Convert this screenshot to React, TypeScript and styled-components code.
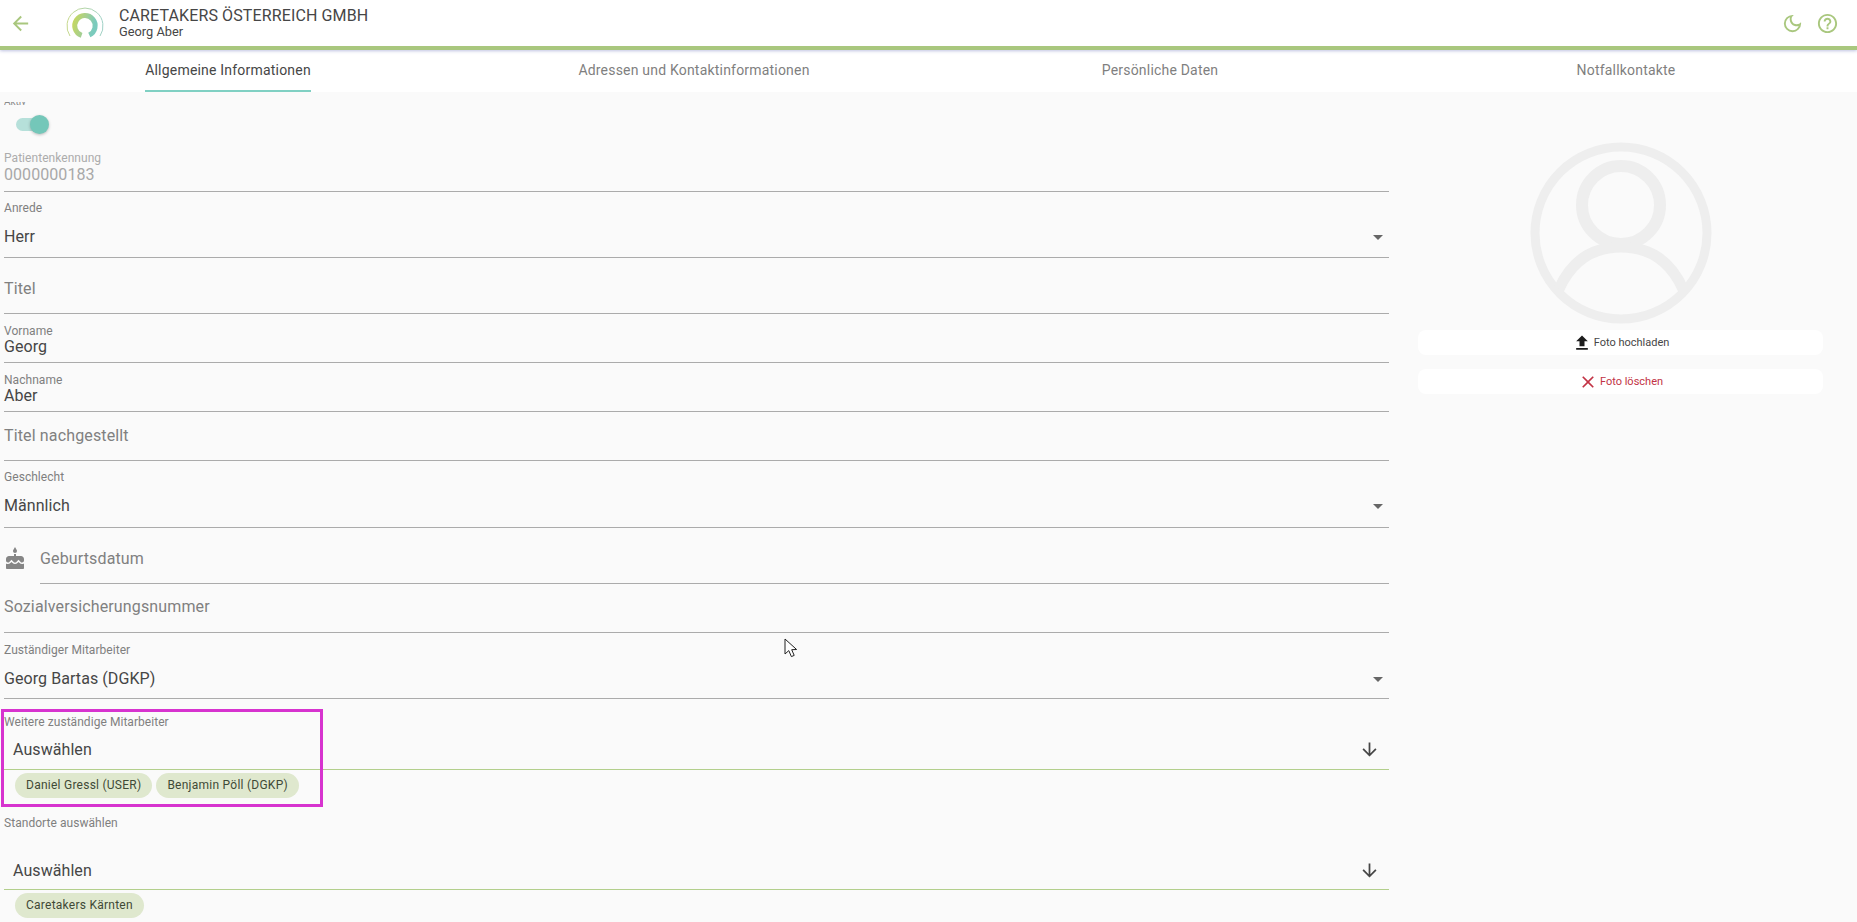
import React from "react";
import styled, { createGlobalStyle } from "styled-components";
import {
  MdArrowBack,
  MdArrowDownward,
  MdCake,
  MdClose,
  MdFileUpload,
  MdHelpOutline,
  MdOutlineDarkMode,
} from "react-icons/md";

const Global = createGlobalStyle`
  html, body { margin: 0; padding: 0; height: 100%; overflow: hidden; background: #fafafa; }
  body { font-family: Roboto, "Liberation Sans", sans-serif; color: #464646; }
  * { box-sizing: border-box; }
`;

const Page = styled.div`
  position: relative;
  height: 922px;
  overflow: hidden;
`;

const Header = styled.header`
  height: 50px;
  background: #fff;
  border-bottom: 4px solid #a9c77e;
  box-shadow: 0 1px 3px rgba(110, 120, 190, 0.45);
  display: flex;
  align-items: center;
  position: relative;
  z-index: 2;
`;

const BackButton = styled.div`
  width: 59px;
  padding-left: 9px;
  display: flex;
  color: #a9c77e;
  font-size: 23px;
`;

const LogoBox = styled.div`
  width: 60px;
  height: 46px;
  flex: none;
`;

const TitleBlock = styled.div`
  flex: 1;
  display: flex;
  flex-direction: column;
  padding-bottom: 2px;
`;

const Company = styled.div`
  font-size: 16px;
  line-height: 19px;
  letter-spacing: 0.12px;
  color: #464646;
`;

const Person = styled.div`
  font-size: 12.8px;
  line-height: 14px;
  color: #464646;
`;

const HeaderActions = styled.div`
  display: flex;
  align-items: center;
  gap: 12px;
  padding-right: 18px;
  color: #a9c77e;
  font-size: 23px;
`;

const Tabs = styled.nav`
  height: 42px;
  background: #fff;
  display: grid;
  grid-template-columns: repeat(4, 466px);
  margin-left: -5px;
  width: 1864px;
`;

const TabCell = styled.div`
  display: flex;
  justify-content: center;
`;

const Tab = styled.div<{ $active?: boolean }>`
  height: 42px;
  line-height: 41px;
  font-size: 14px;
  letter-spacing: 0.2px;
  white-space: nowrap;
  color: ${(p) => (p.$active ? "#464646" : "#7f7f7f")};
  border-bottom: 2px solid ${(p) => (p.$active ? "#80d0c3" : "transparent")};
`;

const Content = styled.main`
  display: grid;
  grid-template-columns: 1385px 405px;
  column-gap: 29px;
  padding-left: 4px;
`;

const FormColumn = styled.section`
  display: flex;
  flex-direction: column;
`;

const ToggleBlock = styled.div`
  height: 54px;
  padding-top: 10px;
`;

const ClippedLabel = styled.div`
  height: 3px;
  overflow: hidden;
  display: flex;
  align-items: flex-end;
  font-size: 10px;
  line-height: 7px;
  color: #8a8a8a;
`;

const Switch = styled.div`
  position: relative;
  margin: 13px 0 0 12px;
  width: 28px;
  height: 13px;
  border-radius: 7px;
  background: #b6e0da;
`;

const SwitchThumb = styled.div`
  position: absolute;
  right: -5px;
  top: -3px;
  width: 19px;
  height: 19px;
  border-radius: 50%;
  background: #74c7b9;
  box-shadow: 0 1px 3px rgba(0, 0, 0, 0.25);
`;

const Field = styled.div<{ $h: number; $pt: number; $inset?: number; $green?: boolean }>`
  height: ${(p) => p.$h}px;
  padding-top: ${(p) => p.$pt}px;
  margin-left: ${(p) => p.$inset ?? 0}px;
  border-bottom: 1px solid ${(p) => (p.$green ? "#b3cf8c" : "#ababab")};
`;

const Label = styled.div<{ $muted?: boolean }>`
  font-size: 12px;
  line-height: 14px;
  letter-spacing: 0.05px;
  color: ${(p) => (p.$muted ? "#acacac" : "#7f7f7f")};
`;

const Value = styled.div<{ $mt?: number; $tone?: "normal" | "hint" | "disabled"; $indent?: number }>`
  display: flex;
  align-items: center;
  justify-content: space-between;
  margin-top: ${(p) => p.$mt ?? 0}px;
  padding-left: ${(p) => p.$indent ?? 0}px;
  font-size: 16px;
  line-height: 20px;
  letter-spacing: ${(p) => (p.$tone === "hint" ? "0.14px" : "0.07px")};
  color: ${(p) =>
    p.$tone === "hint" ? "#808080" : p.$tone === "disabled" ? "#a8a8a8" : "#464646"};
`;

const Caret = styled.span`
  width: 0;
  height: 0;
  margin-right: 6px;
  border-left: 5px solid transparent;
  border-right: 5px solid transparent;
  border-top: 5px solid #666;
`;

const ArrowSlot = styled.span`
  display: flex;
  margin-right: 9px;
  font-size: 21px;
  color: #464646;
`;

const DateRow = styled.div`
  position: relative;
`;

const DateIcon = styled.span`
  position: absolute;
  left: -1px;
  top: 19px;
  display: flex;
  font-size: 24px;
  color: #858585;
`;

const Chips = styled.div<{ $h: number }>`
  height: ${(p) => p.$h}px;
  padding: 3px 0 0 11px;
  display: flex;
  gap: 4px;
`;

const Chip = styled.span`
  height: 25px;
  padding: 0 11px;
  border-radius: 13px;
  background: #dfe8ce;
  color: #3f4a36;
  font-size: 12px;
  letter-spacing: 0.25px;
  line-height: 25px;
  white-space: nowrap;
`;

const Highlighted = styled.div`
  position: relative;
`;

const HighlightFrame = styled.div`
  position: absolute;
  left: -3px;
  top: 10px;
  width: 322px;
  height: 98px;
  border: 3px solid #d733cf;
  pointer-events: none;
`;

const PhotoColumn = styled.aside`
  padding-top: 50px;
  display: flex;
  flex-direction: column;
  align-items: center;
`;

const Avatar = styled.svg`
  width: 182px;
  height: 182px;
  display: block;
  margin-bottom: 6px;
`;

const PhotoButton = styled.div<{ $danger?: boolean }>`
  width: 100%;
  height: 25px;
  margin-bottom: 14px;
  border-radius: 8px;
  background: #fff;
  display: flex;
  align-items: center;
  justify-content: center;
  gap: 2px;
  font-size: 11px;
  color: ${(p) => (p.$danger ? "#c23345" : "#464646")};
  & > svg {
    font-size: 20px;
    color: ${(p) => (p.$danger ? "#c23345" : "#1d1d1d")};
  }
`;

const Pointer = styled.svg`
  position: absolute;
  left: 784px;
  top: 638px;
  width: 14px;
  height: 20px;
  pointer-events: none;
`;

const Logo = () => (
  <svg width="60" height="46" viewBox="0 0 60 46" fill="none">
    <defs>
      <linearGradient id="logoArc" x1="0" y1="0" x2="1" y2="0.3">
        <stop offset="0" stopColor="#c5d85f" />
        <stop offset="0.5" stopColor="#a8cf8e" />
        <stop offset="1" stopColor="#7bcbbd" />
      </linearGradient>
      <linearGradient id="logoRing" x1="0" y1="0" x2="1" y2="0">
        <stop offset="0" stopColor="#c6d88b" />
        <stop offset="1" stopColor="#9ed0c6" />
      </linearGradient>
    </defs>
    <path d="M11 36 A18 18 0 1 1 41 36" stroke="url(#logoRing)" strokeWidth="1" />
    <path d="M22.6 35.4 A10.2 10.2 0 1 1 30.3 35" stroke="url(#logoArc)" strokeWidth="5" />
  </svg>
);

const SelectField = ({ label, value, h, pt, mt }: { label: string; value: string; h: number; pt: number; mt: number }) => (
  <Field $h={h} $pt={pt}>
    <Label>{label}</Label>
    <Value $mt={mt}>
      {value}
      <Caret />
    </Value>
  </Field>
);

const TextField = ({ label, value, h, pt }: { label: string; value: string; h: number; pt: number }) => (
  <Field $h={h} $pt={pt}>
    <Label>{label}</Label>
    <Value $mt={-1}>{value}</Value>
  </Field>
);

const EmptyField = ({ hint, h, pt }: { hint: string; h: number; pt: number }) => (
  <Field $h={h} $pt={pt}>
    <Value $tone="hint">{hint}</Value>
  </Field>
);

const MultiField = ({ label, h, pt, mt }: { label: string; h: number; pt: number; mt: number }) => (
  <Field $h={h} $pt={pt} $green>
    <Label>{label}</Label>
    <Value $mt={mt} $indent={9}>
      Auswählen
      <ArrowSlot>
        <MdArrowDownward />
      </ArrowSlot>
    </Value>
  </Field>
);

export default function App() {
  return (
    <Page>
      <Global />
      <Header>
        <BackButton>
          <MdArrowBack />
        </BackButton>
        <LogoBox>
          <Logo />
        </LogoBox>
        <TitleBlock>
          <Company>CARETAKERS ÖSTERREICH GMBH</Company>
          <Person>Georg Aber</Person>
        </TitleBlock>
        <HeaderActions>
          <MdOutlineDarkMode />
          <MdHelpOutline />
        </HeaderActions>
      </Header>
      <Tabs>
        <TabCell>
          <Tab $active>Allgemeine Informationen</Tab>
        </TabCell>
        <TabCell>
          <Tab>Adressen und Kontaktinformationen</Tab>
        </TabCell>
        <TabCell>
          <Tab>Persönliche Daten</Tab>
        </TabCell>
        <TabCell>
          <Tab>Notfallkontakte</Tab>
        </TabCell>
      </Tabs>
      <Content>
        <FormColumn>
          <ToggleBlock>
            <ClippedLabel>Aktiv</ClippedLabel>
            <Switch>
              <SwitchThumb />
            </Switch>
          </ToggleBlock>
          <Field $h={46} $pt={5}>
            <Label $muted>Patientenkennung</Label>
            <Value $tone="disabled">0000000183</Value>
          </Field>
          <SelectField label="Anrede" value="Herr" h={66} pt={9} mt={12} />
          <EmptyField hint="Titel" h={56} pt={21} />
          <TextField label="Vorname" value="Georg" h={49} pt={10} />
          <TextField label="Nachname" value="Aber" h={49} pt={10} />
          <EmptyField hint="Titel nachgestellt" h={49} pt={14} />
          <SelectField label="Geschlecht" value="Männlich" h={67} pt={9} mt={12} />
          <DateRow>
            <DateIcon>
              <MdCake />
            </DateIcon>
            <Field $h={56} $pt={21} $inset={36}>
              <Value $tone="hint">Geburtsdatum</Value>
            </Field>
          </DateRow>
          <EmptyField hint="Sozialversicherungsnummer" h={49} pt={13} />
          <SelectField label="Zuständiger Mitarbeiter" value="Georg Bartas (DGKP)" h={66} pt={10} mt={12} />
          <Highlighted>
            <MultiField label="Weitere zuständige Mitarbeiter" h={71} pt={16} mt={10} />
            <Chips $h={43}>
              <Chip>Daniel Gressl (USER)</Chip>
              <Chip>Benjamin Pöll (DGKP)</Chip>
            </Chips>
            <HighlightFrame />
          </Highlighted>
          <MultiField label="Standorte auswählen" h={77} pt={3} mt={30} />
          <Chips $h={30}>
            <Chip>Caretakers Kärnten</Chip>
          </Chips>
        </FormColumn>
        <PhotoColumn>
          <Avatar viewBox="0 0 182 182" fill="none" stroke="#eeeeee">
            <circle cx="91" cy="91" r="86" strokeWidth="9" />
            <circle cx="91" cy="63" r="39" strokeWidth="12" />
            <path d="M29 147 C42 118 64 105 91 105 C118 105 140 118 153 147" strokeWidth="11" />
          </Avatar>
          <PhotoButton>
            <MdFileUpload />
            Foto hochladen
          </PhotoButton>
          <PhotoButton $danger>
            <MdClose />
            Foto löschen
          </PhotoButton>
        </PhotoColumn>
      </Content>
      <Pointer viewBox="0 0 14 20">
        <path d="M1 1 L1 16 L4.8 12.6 L7.4 18.6 L10.2 17.4 L7.7 11.7 L12.6 11.5 Z" fill="#fff" stroke="#222" strokeWidth="1" />
      </Pointer>
    </Page>
  );
}
